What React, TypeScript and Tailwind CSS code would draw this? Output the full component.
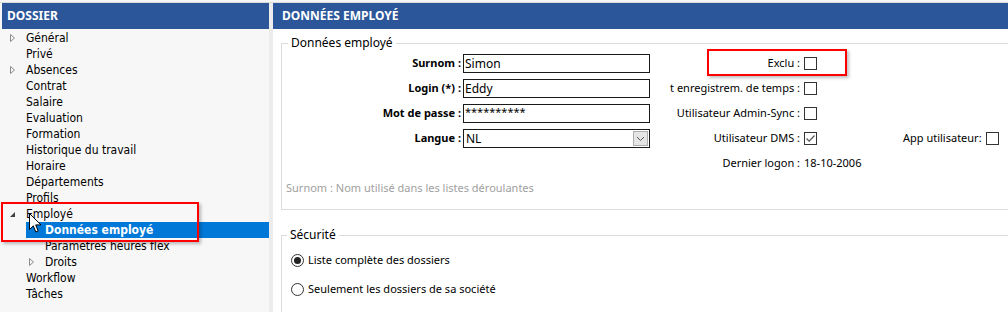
import * as React from "react"

const treeFont = { fontFamily: '"DejaVu Sans Condensed", "DejaVu Sans", sans-serif' }
const uiFont = { fontFamily: '"Noto Sans", "Open Sans", sans-serif' }

type TreeItem = { label: string; level: 0 | 1; expander?: "closed" | "open"; selected?: boolean }

const treeItems: TreeItem[] = [
  { label: "Général", level: 0, expander: "closed" },
  { label: "Privé", level: 0 },
  { label: "Absences", level: 0, expander: "closed" },
  { label: "Contrat", level: 0 },
  { label: "Salaire", level: 0 },
  { label: "Evaluation", level: 0 },
  { label: "Formation", level: 0 },
  { label: "Historique du travail", level: 0 },
  { label: "Horaire", level: 0 },
  { label: "Départements", level: 0 },
  { label: "Profils", level: 0 },
  { label: "Employé", level: 0, expander: "open" },
  { label: "Données employé", level: 1, selected: true },
  { label: "Paramètres heures flex", level: 1 },
  { label: "Droits", level: 1, expander: "closed" },
  { label: "Workflow", level: 0 },
  { label: "Tâches", level: 0 },
]

function Expander({ kind }: { kind?: "closed" | "open" }) {
  if (kind === "closed") {
    return (
      <svg width="7" height="10" viewBox="0 0 7 10" className="shrink-0">
        <path d="M1.5 1.5 L5.5 5 L1.5 8.5 Z" fill="none" stroke="#8a8a8a" strokeWidth="1" />
      </svg>
    )
  }
  if (kind === "open") {
    return (
      <svg width="7" height="10" viewBox="0 0 7 10" className="shrink-0">
        <path d="M6 3 L6 8 L1 8 Z" fill="#404040" />
      </svg>
    )
  }
  return <span className="inline-block w-[7px] shrink-0" />
}

function Checkbox({ checked }: { checked?: boolean }) {
  return (
    <span className="flex h-[13px] w-[13px] shrink-0 items-center justify-center border border-[#333] bg-white">
      {checked && (
        <svg width="11" height="11" viewBox="0 0 11 11">
          <path d="M1.5 5.5 L4.2 8.2 L9.5 2.5" fill="none" stroke="#555" strokeWidth="1.2" />
        </svg>
      )}
    </span>
  )
}

function Radio({ checked }: { checked?: boolean }) {
  return (
    <span className="flex h-[13px] w-[13px] shrink-0 items-center justify-center rounded-full border border-[#333] bg-white">
      {checked && <span className="h-[7px] w-[7px] rounded-full bg-[#222]" />}
    </span>
  )
}

function Cursor() {
  return (
    <svg width="13" height="21" viewBox="0 0 13 21" className="absolute left-[29px] top-[184px]">
      <path
        d="M0.5 0.5 L0.5 16.5 L4.3 12.8 L6.8 19 L9.2 18 L6.7 11.9 L12 11.9 Z"
        fill="#fff"
        stroke="#000"
        strokeWidth="1"
        strokeLinejoin="round"
      />
    </svg>
  )
}

// one line of the "Données employé" group: bold label, input, side label + box, extra column
function FieldRow({
  label,
  children,
  side,
  box,
  right,
}: {
  label?: string
  children?: React.ReactNode
  side?: string
  box?: React.ReactNode
  right?: React.ReactNode
}) {
  return (
    <div className="flex h-[25px] items-center">
      <div className="w-[178px] shrink-0 text-right font-bold">{label}</div>
      <div className="ml-[2px] w-[187px] shrink-0">{children}</div>
      <div className="w-[150px] shrink-0 overflow-hidden text-right">
        <span className="float-right whitespace-nowrap">{side}</span>
      </div>
      <div className="flex w-[17px] shrink-0 items-center pl-[4px]">{box}</div>
      <div className="flex flex-1 items-center">{right}</div>
    </div>
  )
}

function TextInput({ value }: { value: string }) {
  return (
    <div className="flex h-[19px] items-center border border-[#1a1a1a] bg-white px-[1px] text-[12px] leading-none">{value}</div>
  )
}

export default function App() {
  return (
    <div className="flex h-[312px] w-[1008px] flex-col overflow-hidden bg-white text-[12px] text-black">
      <div className="h-[3px] shrink-0 border-b border-[#dadada] bg-[#f5f5f5]" />
      <div className="flex min-h-0 flex-1">
        <aside className="flex w-[269px] shrink-0 flex-col bg-[#f7f7f7]" style={treeFont}>
          <div className="ml-[2px] flex h-[26px] shrink-0 items-center bg-[#2b579a] pl-[5px] text-[12px] font-bold text-white" style={uiFont}>
            DOSSIER
          </div>
          <div className="relative pt-[1px]">
            {treeItems.map((item) => (
              <div key={item.label} className="flex h-[16px] items-center">
                <div className={item.level === 0 ? "flex w-[26px] justify-start pl-[9px]" : "flex w-[45px] justify-start pl-[28px]"}>
                  <Expander kind={item.expander} />
                </div>
                <div
                  className={
                    item.selected
                      ? "-ml-[19px] flex h-[16px] flex-1 items-center bg-[#0078d7] pl-[19px] font-bold text-white"
                      : "whitespace-nowrap"
                  }
                >
                  {item.label}
                </div>
              </div>
            ))}
            <div className="absolute left-[1px] top-[173px] h-[40px] w-[198px] border-2 border-[#ff0000] shadow-[2px_2px_3px_rgba(0,0,0,0.25)]" />
            <Cursor />
          </div>
        </aside>
        <div className="w-[4px] shrink-0 bg-[#ececec]" />
        <main className="flex min-w-0 flex-1 flex-col overflow-hidden text-[11px]" style={uiFont}>
          <div className="flex h-[26px] shrink-0 items-center bg-[#2b579a] pl-[9px] text-[12px] font-bold text-white">
            DONNÉES EMPLOYÉ
          </div>
          <div className="pl-[8px]">
            <fieldset className="relative mt-[6px] w-[760px] border border-[#dcdcdc] pb-[9px] pl-[1px]">
              <legend className="ml-[5px] px-[3px] text-[12px] leading-[16px]">Données employé</legend>
              <FieldRow label="Surnom :" side="Exclu :" box={<Checkbox />}>
                <TextInput value="Simon" />
              </FieldRow>
              <FieldRow label="Login (*) :" side="t enregistrem. de temps :" box={<Checkbox />}>
                <TextInput value="Eddy" />
              </FieldRow>
              <FieldRow label="Mot de passe :" side="Utilisateur Admin-Sync :" box={<Checkbox />}>
                <div className="flex h-[19px] items-start border border-[#1a1a1a] bg-white px-[1px] text-[11px] leading-[14px]">**********</div>
              </FieldRow>
              <FieldRow
                label="Langue :"
                side="Utilisateur DMS :"
                box={<Checkbox checked />}
                right={
                  <div className="ml-[86px] flex items-center">
                    <span className="whitespace-nowrap">App utilisateur:</span>
                    <span className="ml-[4px]"><Checkbox /></span>
                  </div>
                }
              >
                <div className="flex h-[19px] items-center justify-between border border-[#1a1a1a] bg-white pl-[2px] pr-[1px] text-[12px]">
                  <span>NL</span>
                  <span className="flex h-[15px] w-[15px] items-center justify-center border border-[#adadad] bg-[#e5e5e5]">
                    <svg width="9" height="6" viewBox="0 0 9 6">
                      <path d="M1 1 L4.5 4.5 L8 1" fill="none" stroke="#555" strokeWidth="1" />
                    </svg>
                  </span>
                </div>
              </FieldRow>
              <FieldRow side="Dernier logon :" box={<span className="whitespace-nowrap">18-10-2006</span>} />
              <div className="flex h-[24px] items-center pl-[3px] text-[#a0a0a0]">Surnom : Nom utilisé dans les listes déroulantes</div>
              <div className="absolute left-[425px] top-[-2px] h-[27px] w-[140px] border-2 border-[#ff0000] shadow-[2px_2px_3px_rgba(0,0,0,0.25)]" />
            </fieldset>
            <fieldset className="mt-[17px] w-[760px] border border-[#dcdcdc] pt-[3px]">
              <legend className="ml-[5px] px-[3px] text-[12px] leading-[16px]">Sécurité</legend>
              <div className="flex h-[29px] items-center gap-[4px] pl-[9px]">
                <Radio checked />
                <span>Liste complète des dossiers</span>
              </div>
              <div className="flex h-[29px] items-center gap-[4px] pl-[9px]">
                <Radio />
                <span>Seulement les dossiers de sa société</span>
              </div>
              <div className="flex h-[29px] items-center gap-[4px] pl-[9px]">
                <Radio />
                <span>Seulement ses propres dossiers</span>
              </div>
            </fieldset>
          </div>
        </main>
      </div>
    </div>
  )
}
